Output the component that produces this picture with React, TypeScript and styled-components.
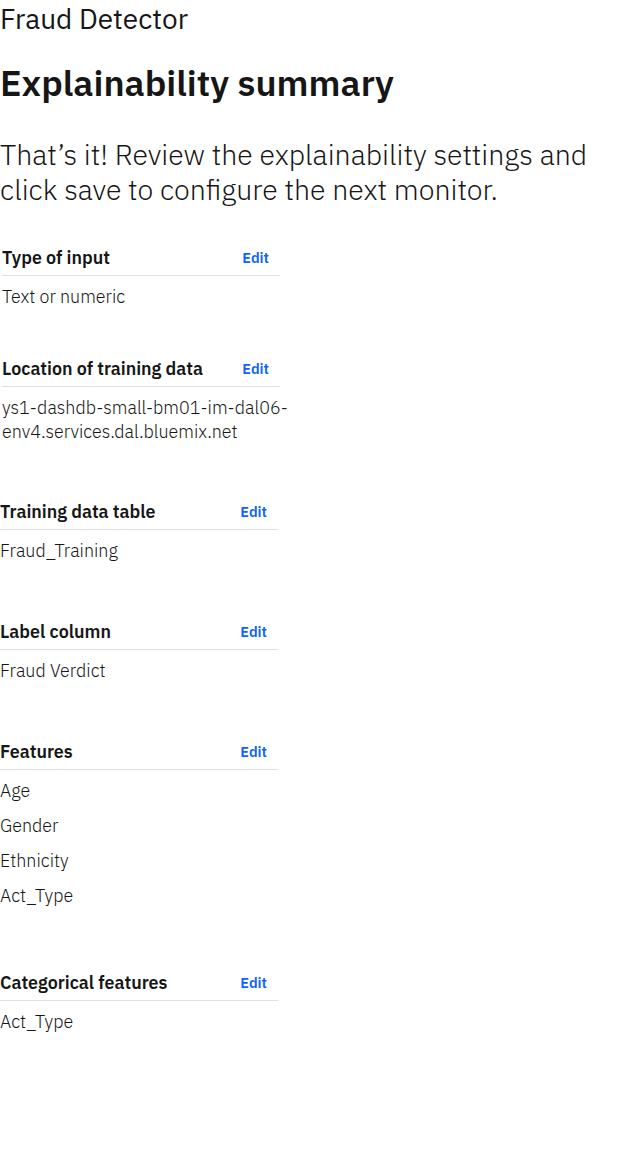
import React from "react";
import styled, { createGlobalStyle } from "styled-components";

const GlobalStyle = createGlobalStyle`
  html, body {
    margin: 0;
    padding: 0;
    background: #ffffff;
  }
  body {
    font-family: "IBM Plex Sans", "Roboto", "Liberation Sans", sans-serif;
    color: #161616;
    -webkit-font-smoothing: antialiased;
  }
  * { box-sizing: border-box; }
`;

const Page = styled.main`
  display: flex;
  flex-direction: column;
  width: 632px;
  padding: 0;
`;

const Eyebrow = styled.div`
  font-size: 28px;
  font-weight: 400;
  line-height: 38px;
  color: #161616;
`;

const Title = styled.h1`
  margin: 25px 0 0 0;
  font-size: 36px;
  font-weight: 600;
  line-height: 40px;
  color: #161616;
`;

const Lead = styled.p`
  margin: 34px 0 0 0;
  font-size: 28.5px;
  font-weight: 300;
  line-height: 35px;
  color: #161616;
  max-width: 610px;
`;

const Sections = styled.div`
  display: flex;
  flex-direction: column;
  margin-top: 40px;
`;

const Section = styled.section<{ $inset: number; $after: number }>`
  display: flex;
  flex-direction: column;
  margin-left: ${(p) => p.$inset}px;
  margin-bottom: ${(p) => p.$after}px;
`;

const SectionHeader = styled.div`
  display: flex;
  align-items: center;
  justify-content: space-between;
  width: 278px;
  height: 29px;
  padding: 0 11px 7px 0;
  border-bottom: 1px solid #e0e0e0;
`;

const SectionTitle = styled.h3`
  margin: 0;
  font-size: 17.9px;
  font-weight: 600;
  line-height: 22px;
  color: #161616;
`;

const EditLink = styled.a`
  font-size: 14.5px;
  font-weight: 600;
  line-height: 18px;
  color: #0f62fe;
  text-decoration: none;
  cursor: pointer;
`;

const Values = styled.ul`
  list-style: none;
  margin: 0;
  padding: 9px 0 0 0;
  max-width: 320px;
  display: flex;
  flex-direction: column;
  gap: 11px;
`;

const Value = styled.li`
  font-size: 17.9px;
  font-weight: 300;
  line-height: 24px;
  color: #161616;
`;

type SectionData = {
  title: string;
  values: string[];
  inset: number;
  after: number;
};

const sections: SectionData[] = [
  { title: "Type of input", values: ["Text or numeric"], inset: 2, after: 49 },
  {
    title: "Location of training data",
    values: ["ys1-dashdb-small-bm01-im-dal06-env4.services.dal.bluemix.net"],
    inset: 2,
    after: 57,
  },
  { title: "Training data table", values: ["Fraud_Training"], inset: 0, after: 58 },
  { title: "Label column", values: ["Fraud Verdict"], inset: 0, after: 58 },
  { title: "Features", values: ["Age", "Gender", "Ethnicity", "Act_Type"], inset: 0, after: 64 },
  { title: "Categorical features", values: ["Act_Type"], inset: 0, after: 40 },
];

export default function App() {
  return (
    <>
      <GlobalStyle />
      <Page>
        <Eyebrow>Fraud Detector</Eyebrow>
        <Title>Explainability summary</Title>
        <Lead>
          That’s it! Review the explainability settings and click save to configure the next monitor.
        </Lead>
        <Sections>
          {sections.map((s) => (
            <Section key={s.title} $inset={s.inset} $after={s.after}>
              <SectionHeader>
                <SectionTitle>{s.title}</SectionTitle>
                <EditLink>Edit</EditLink>
              </SectionHeader>
              <Values>
                {s.values.map((v) => (
                  <Value key={v}>{v}</Value>
                ))}
              </Values>
            </Section>
          ))}
        </Sections>
      </Page>
    </>
  );
}
